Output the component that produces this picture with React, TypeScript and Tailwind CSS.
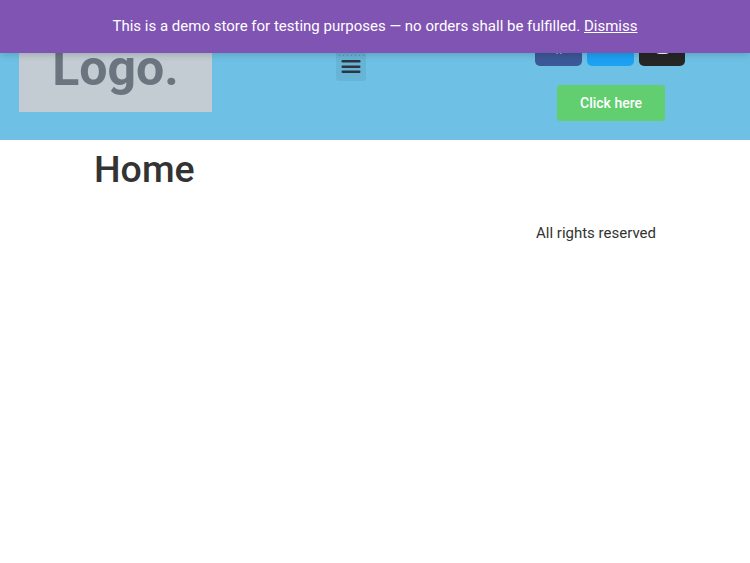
import { FaFacebook, FaInstagram, FaTwitter } from "react-icons/fa";

const font = "font-['Roboto',sans-serif]";

export default function App() {
  return (
    <div className={`relative min-h-[563px] bg-white ${font}`}>
      <p className="absolute top-0 left-0 right-0 z-10 h-[53px] bg-[#7f54b3] text-center text-[15px] leading-[53px] text-white shadow-[0_1px_8px_rgba(0,0,0,0.2)]">
        This is a demo store for testing purposes — no orders shall be fulfilled. <a className="underline">Dismiss</a>
      </p>
      <header className="flex h-[140px] items-start bg-[#6ec1e4]">
        <div className="ml-[19px] mt-[25px] flex h-[87px] w-[193px] items-center justify-center bg-[#c3ccd3]">
          <span className="text-[50px] font-bold text-[#6b7580]">Logo.</span>
        </div>
        <div className="ml-[124px] mt-[50px] flex h-[31px] w-[30px] items-start justify-center rounded-[3px] bg-[#66b4d6] pt-[5px]">
          <svg className="h-[18px] w-[26px]" viewBox="0 0 26 18" fill="#2f3540">
            <g fill="#5293b1">
              <rect x="1" y="0" width="1" height="1" />
              <rect x="5" y="0" width="1" height="1" />
              <rect x="9" y="0" width="1" height="1" />
              <rect x="13" y="0" width="1" height="1" />
              <rect x="17" y="0" width="1" height="1" />
              <rect x="21" y="0" width="1" height="1" />
              <rect x="25" y="0" width="1" height="1" />
            </g>
            <rect x="3.5" y="5" width="19" height="2.5" rx="1.2" />
            <rect x="3.5" y="10.5" width="19" height="2.5" rx="1.2" />
            <rect x="3.5" y="15.5" width="19" height="2.5" rx="1.2" />
          </svg>
        </div>
        <div className="ml-[169px] flex w-[150px] flex-col items-center">
          <div className="mt-[26px] flex gap-[5px]">
            <div className="flex h-10 w-[47px] items-center justify-center rounded-[5px] bg-[#3b5998] text-white">
              <FaFacebook className="h-4 w-4" />
            </div>
            <div className="flex h-10 w-[47px] items-center justify-center rounded-[5px] bg-[#1da1f2] text-white">
              <FaTwitter className="h-[15px] w-[15px]" />
            </div>
            <div className="flex h-10 w-[46px] items-center justify-center rounded-[5px] bg-[#262626] text-white">
              <FaInstagram className="h-[17px] w-[17px]" />
            </div>
          </div>
          <a className="ml-[2px] mt-[19px] flex h-9 w-[108px] items-center justify-center rounded-[3px] bg-[#61ce70] pb-px text-sm font-medium text-white">
            Click here
          </a>
        </div>
      </header>
      <main>
        <h1 className="ml-[94px] mt-[6px] text-[37.5px] font-medium leading-[46px] text-[#333333]">Home</h1>
        <p className="ml-[536px] mt-[29px] text-[15px] leading-6 text-[#333333]">All rights reserved</p>
      </main>
    </div>
  );
}
